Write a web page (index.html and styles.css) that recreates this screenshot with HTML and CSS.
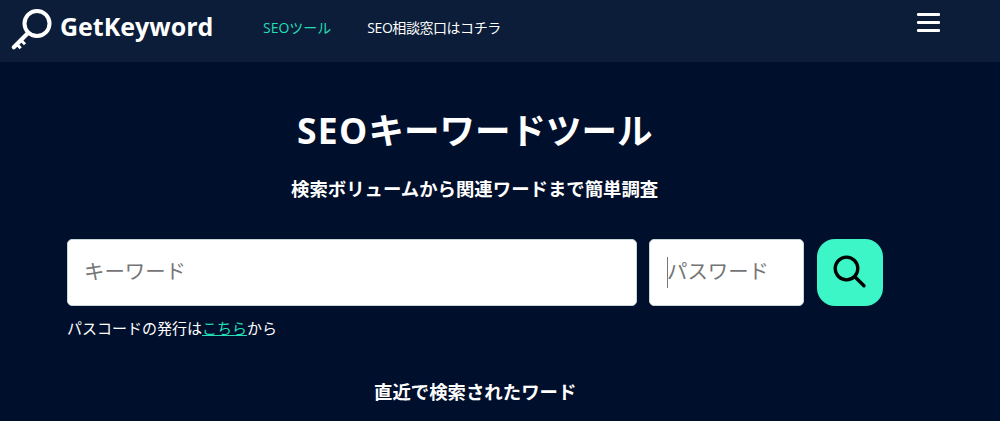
FILE: index.html
```html
<!DOCTYPE html>
<html lang="ja">
<head>
<meta charset="utf-8">
<title>GetKeyword</title>
<link rel="stylesheet" href="styles.css">
</head>
<body>
<header class="site-header">
  <a class="logo" href="#">
    <svg class="logo-icon" width="44" height="44" viewBox="0 0 44 44" aria-hidden="true">
      <circle cx="27" cy="16.500" r="12.500" fill="none" stroke="#fff" stroke-width="4"/>
      <path d="M18 26 L3.800 40.200" fill="none" stroke="#fff" stroke-width="4.200" stroke-linecap="round"/>
      <path d="M6 36.300 L10.700 41.300 M10 32.300 L15 37.300" fill="none" stroke="#fff" stroke-width="3"/>
    </svg>
    <span class="logo-text">GetKeyword</span>
  </a>
  <nav class="main-nav">
    <a class="nav-link active" href="#">SEOツール</a>
    <a class="nav-link nav-tight" href="#">SEO相談窓口はコチラ</a>
  </nav>
  <button class="menu-button" aria-label="メニュー"><span></span><span></span><span></span></button>
</header>
<main class="content">
  <h1 class="title"><span class="title-latin">SEO</span>キーワードツール</h1>
  <p class="subtitle">検索ボリュームから関連ワードまで簡単調査</p>
  <form class="search">
    <div class="search-row">
      <input class="field field-keyword" type="text" placeholder="キーワード">
      <div class="field field-password"><i class="caret"></i><span>パスワード</span></div>
      <button class="search-button" type="button" aria-label="検索">
        <svg width="36" height="36" viewBox="0 0 36 36" aria-hidden="true">
          <circle cx="14.500" cy="13.500" r="11.300" fill="none" stroke="#000" stroke-width="3.300"/>
          <path d="M22.800 21.800 L32 30.800" fill="none" stroke="#000" stroke-width="3.400" stroke-linecap="round"/>
        </svg>
      </button>
    </div>
    <p class="note">パスコードの発行は<a href="#">こちら</a>から</p>
  </form>
  <h2 class="recent">直近で検索されたワード</h2>
</main>
</body>
</html>
```
FILE: styles.css
```css
* { box-sizing: border-box; }
html, body { margin: 0; height: 421px; overflow: hidden; }
body {
  background: #000f2c;
  color: #fff;
  font-family: "Open Sans", "Noto Sans CJK JP", sans-serif;
}
.site-header {
  height: 62px;
  background: #0b1d39;
  display: flex;
  align-items: flex-start;
  padding-left: 10px;
}
.logo {
  display: flex;
  align-items: center;
  color: #fff;
  text-decoration: none;
  width: 253px;
  height: 58px;
}
.logo-icon { flex: none; }
.logo-text {
  font-size: 25px;
  font-weight: 700;
  margin-left: 6px;
  margin-top: -7px;
}
.main-nav { display: flex; gap: 36px; padding-top: 18px; }
.nav-link { color: #fff; text-decoration: none; font-size: 14px; line-height: 20px; }
.nav-link.active { color: #25dcb4; }
.nav-tight { letter-spacing: -.45px; }
.menu-button {
  margin-left: auto;
  margin-right: 60px;
  margin-top: 13px;
  width: 23px;
  padding: 0;
  background: none;
  border: 0;
  display: flex;
  flex-direction: column;
  gap: 5px;
}
.menu-button span { display: block; height: 3px; background: #fff; border-radius: 1px; }
.content { display: flex; flex-direction: column; }
.title {
  margin: 42px 0 0 297px;
  font-size: 35.500px;
  line-height: 52px;
  font-weight: 700;
}
.title-latin { letter-spacing: 1.300px; }
.subtitle {
  margin: 21px 0 0 291px;
  font-size: 18.400px;
  line-height: 24px;
  font-weight: 700;
}
.search { margin: 38px 0 0 67px; }
.search-row { display: flex; align-items: stretch; height: 67px; }
.field {
  background: #fff;
  border: 1px solid #c9d6d8;
  border-radius: 5px;
  font: inherit;
  font-size: 20.400px;
  color: #757575;
  outline: 0;
}
.field::placeholder { color: #757575; opacity: 1; }
.field-keyword { width: 570px; padding: 0 16px 4px; }
.field-password {
  width: 155px;
  margin-left: 12px;
  padding: 0 0 5px 17px;
  display: flex;
  align-items: center;
  position: relative;
}
.caret {
  position: absolute;
  left: 17px;
  top: 17px;
  width: 1px;
  height: 31px;
  background: #777;
}
.search-button {
  width: 66px;
  margin-left: 13px;
  border: 0;
  border-radius: 18px;
  background: #3cf6c8;
  padding: 0;
  display: flex;
  align-items: center;
  justify-content: center;
}
.note { margin: 11px 0 0; font-size: 15px; line-height: 22px; }
.note a { color: #25dcb4; }
.recent {
  margin: 40px 0 0 374px;
  font-size: 18.400px;
  line-height: 26px;
  font-weight: 700;
}
```
